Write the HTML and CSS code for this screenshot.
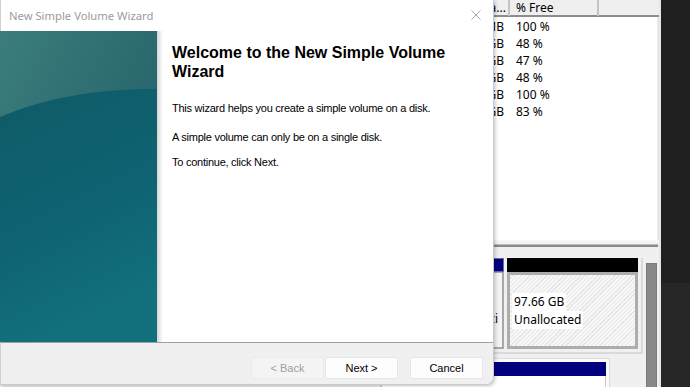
FILE: index.html
```html
<!DOCTYPE html>
<html>
<head>
<meta charset="utf-8">
<link rel="stylesheet" href="styles.css">
</head>
<body>
<div class="desktop">
  <div class="mgmt">
    <div class="colheads">
      <div class="colhead c1">Capa...</div>
      <div class="colhead c2">% Free</div>
      <div class="colhead c3"></div>
    </div>
    <div class="list">
      <div class="row"><span class="cap">0 MB</span><span class="free">100 %</span></div>
      <div class="row"><span class="cap">GB</span><span class="free">48 %</span></div>
      <div class="row"><span class="cap">GB</span><span class="free">47 %</span></div>
      <div class="row"><span class="cap">GB</span><span class="free">48 %</span></div>
      <div class="row"><span class="cap">GB</span><span class="free">100 %</span></div>
      <div class="row"><span class="cap">GB</span><span class="free">83 %</span></div>
    </div>
    <div class="hscroll"><div class="hthumb"></div></div>
    <div class="diskpane">
      <div class="disks">
        <div class="disk">
          <div class="parts">
            <div class="part left">
              <div class="bar blue"></div>
              <div class="pbox"><span class="ptext">Healthy (Partiti</span></div>
            </div>
            <div class="part unalloc">
              <div class="bar black"></div>
              <div class="pbox hatch"><span class="ptext">97.66 GB</span><span class="ptext">Unallocated</span></div>
            </div>
          </div>
        </div>
        <div class="disk2">
          <div class="part2">
            <div class="bar2"></div>
            <div class="pbox2"></div>
          </div>
        </div>
      </div>
      <div class="vscroll"><div class="vthumb"></div></div>
    </div>
  </div>
  <div class="dark"></div>

  <div class="dialog">
    <div class="titlebar">
      <span class="title">New Simple Volume Wizard</span>
      <svg class="close" width="10" height="10" viewBox="0 0 10 10"><path d="M0.5 0.5 L9.5 9.5 M9.5 0.5 L0.5 9.5" stroke="#a8a8a8" stroke-width="1"/></svg>
    </div>
    <div class="dbody">
      <div class="banner">
        <svg width="157" height="311" viewBox="0 0 157 311" preserveAspectRatio="none">
          <defs>
            <linearGradient id="g1" x1="0" y1="0" x2="1" y2="1">
              <stop offset="0" stop-color="#3c7d7c"/>
              <stop offset="0.5" stop-color="#2b6a6f"/>
              <stop offset="1" stop-color="#1b6670"/>
            </linearGradient>
            <linearGradient id="g2" x1="0" y1="0" x2="0.3" y2="1">
              <stop offset="0" stop-color="#0f5b66"/>
              <stop offset="0.6" stop-color="#0f6373"/>
              <stop offset="1" stop-color="#12707c"/>
            </linearGradient>
          </defs>
          <rect width="157" height="311" fill="url(#g1)"/>
          <path d="M0 86 C45 66 105 57 157 58 L157 311 L0 311 Z" fill="url(#g2)"/>
        </svg>
      </div>
      <div class="shade"></div>
      <div class="content">
        <h1 class="heading">Welcome to the New Simple Volume Wizard</h1>
        <p class="para p1">This wizard helps you create a simple volume on a disk.</p>
        <p class="para p2">A simple volume can only be on a single disk.</p>
        <p class="para p3">To continue, click Next.</p>
      </div>
    </div>
    <div class="footer">
      <button class="btn disabled">&lt; Back</button>
      <button class="btn next">Next &gt;</button>
      <button class="btn cancel">Cancel</button>
    </div>
  </div>
</div>
</body>
</html>
```

FILE: styles.css
```css
* { box-sizing: border-box; }
html, body { margin: 0; padding: 0; }
body { width: 690px; height: 387px; overflow: hidden; background: #202020; }

.desktop {
  position: relative;
  width: 690px;
  height: 387px;
  display: flex;
}

.mgmt {
  width: 661px;
  height: 387px;
  flex: none;
  display: flex;
  flex-direction: column;
  background: #f0f0f0;
  border-right: 2px solid #e6e6e6;
  font-family: "Noto Sans", "Open Sans", sans-serif;
  font-size: 12px;
  color: #000;
  overflow: hidden;
}

.dark {
  flex: 1;
  background: linear-gradient(#1f1f1f 0 283px, #272727 283px);
}

.colheads {
  height: 17px;
  flex: none;
  display: grid;
  grid-template-columns: 510px 89px 60px;
  background: #efefef;
  border-bottom: 2px solid #8c8c8c;
}
.colhead {
  line-height: 16px;
  border-right: 2px solid #c4c4c4;
  padding-left: 6px;
  white-space: nowrap;
}
.colhead.c1 { text-align: right; padding-right: 2px; }
.colhead.c3 { border-right: none; }

.list {
  height: 223px;
  flex: none;
  background: #fff;
  padding-top: 1px;
  border-right: 2px solid #e8e8e8;
}
.row {
  height: 17px;
  display: grid;
  grid-template-columns: 504px 1fr;
  line-height: 17px;
}
.row .cap { text-align: right; }
.row .free { padding-left: 12px; }

.hscroll {
  height: 7px;
  flex: none;
  background: linear-gradient(#f8f8f8, #ececec);
  padding-top: 4px;
}
.hthumb {
  height: 3px;
  width: 658px;
  background: #8a8a8a;
  border-top: 1px solid #bdbdbd;
}

.diskpane {
  flex: 1;
  display: flex;
  padding-top: 11px;
  background: #f0f0f0;
}
.disks {
  width: 643px;
  flex: none;
  display: flex;
  flex-direction: column;
}
.disk {
  height: 96px;
  flex: none;
  border-bottom: 2px solid #dadada;
  border-right: 2px solid #dadada;
}
.parts {
  display: flex;
  gap: 3px;
  padding-left: 380px;
}
.part { display: flex; flex-direction: column; }
.part.left { width: 124px; }
.part.unalloc { width: 131px; }
.bar { height: 14px; flex: none; }
.bar.blue { background: #00007f; border: 1px solid #6a6a9a; }
.bar.black { background: #000; }
.pbox {
  height: 77px;
  border: 2px solid #a8a8a8;
  border-top-width: 1px;
  background: #f6f6f6;
  display: flex;
  flex-direction: column;
  justify-content: center;
  align-items: flex-start;
  padding: 5px 0 5px 0;
  font-size: 12px;
  line-height: 18px;
}
.part.left .pbox { align-items: flex-end; padding-right: 2px; padding-top: 22px; background: #f4f4f4; }
.pbox.hatch {
  border: 3px solid #adadad;
  background: repeating-linear-gradient(135deg, #f7f7f7 0 2px, #e6e6e6 2px 3px);
  padding-left: 2px;
}
.ptext { background: #fff; padding: 0 2px; }
.part.left .ptext { background: transparent; }

.disk2 {
  padding-top: 4px;
  padding-left: 380px;
}
.part2 {
  width: 230px;
  border: 1px solid #dcdcdc;
  border-bottom: none;
  background: #fafafa;
  padding: 3px 3px 0 0;
  height: 40px;
}
.bar2 { height: 14px; background: #00007f; }
.pbox2 { height: 20px; background: #fff; border: 1px solid #c8c8c8; border-top: none; }

.vscroll {
  width: 16px;
  flex: none;
  padding: 5px 2px 3px 3px;
}
.vthumb {
  height: 100%;
  background: #888;
  border: 1px solid #7a7a7a;
}

/* Dialog */
.dialog {
  position: absolute;
  left: 0;
  top: 0;
  width: 494px;
  height: 385px;
  background: #fff;
  border-right: 1px solid #c9c9c9;
  border-bottom: 1px solid #c9c9c9;
  border-radius: 0 0 8px 0;
  overflow: hidden;
  display: flex;
  flex-direction: column;
  box-shadow: 1px 1px 4px rgba(0,0,0,0.25);
}
.titlebar {
  height: 31px;
  flex: none;
  display: flex;
  align-items: center;
  justify-content: space-between;
  padding: 0 12px 0 8px;
  border-left: 1px solid #d0d0d0;
}
.title {
  font-family: "Noto Sans", "Open Sans", sans-serif;
  font-size: 11.25px;
  color: #9b9b9b;
  margin-top: -1px;
}
.close { margin-top: -2px; }

.dbody {
  height: 311px;
  flex: none;
  display: flex;
}
.banner { width: 157px; height: 311px; flex: none; }
.banner svg { display: block; }
.shade {
  width: 6px;
  flex: none;
  background: linear-gradient(90deg, #d4d4d4, #f4f4f4 70%, #fff);
}
.content {
  flex: 1;
  padding: 12px 0 0 9px;
  font-family: "Liberation Sans", Arial, sans-serif;
  color: #000;
}
.heading {
  margin: 0;
  font-family: "Liberation Sans", Arial, sans-serif;
  font-weight: bold;
  font-size: 16px;
  line-height: 19px;
}
.para {
  margin: 0;
  font-size: 11px;
  line-height: 13px;
  letter-spacing: -0.25px;
}
.p1 { margin-top: 21px; }
.p2 { margin-top: 16px; }
.p3 { margin-top: 12px; }

.footer {
  flex: 1;
  background: #f0f0f0;
  border-top: 1px solid #a0a0a0;
  border-left: 1px solid #d0d0d0;
  display: flex;
  align-items: flex-start;
  padding: 14px 0 0 250px;
}
.btn {
  height: 22px;
  width: 73px;
  font-family: "Liberation Sans", Arial, sans-serif;
  font-size: 11px;
  background: #fdfdfd;
  border: 1px solid #e6e6e6;
  border-radius: 2px;
  color: #000;
  padding: 0;
}
.btn.disabled { background: #f4f4f4; color: #a0a0a0; border-color: #ececec; }
.btn.next { margin-left: 1px; }
.btn.cancel { margin-left: 12px; }
```
